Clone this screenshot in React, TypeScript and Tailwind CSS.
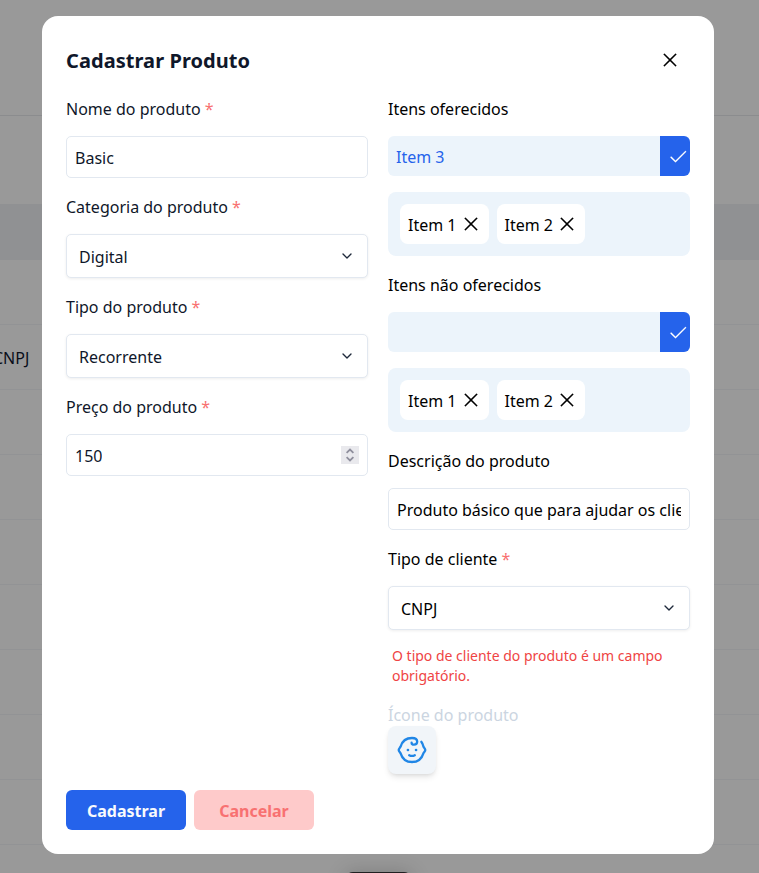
import type { ReactNode } from "react";
import { ChevronDown } from "lucide-react";
import { PiCheck, PiX } from "react-icons/pi";

function Label({ children, required }: { children: ReactNode; required?: boolean }) {
  return (
    <span className="block h-6 pt-px leading-6">
      {children}
      {required && <span className="text-[#f87171]"> *</span>}
    </span>
  );
}

function Select({ value }: { value: string }) {
  return (
    <button className="flex h-11 w-full items-center justify-between rounded-[5px] border border-[#e2e8f0] bg-white px-3 text-left shadow-[0_1px_3px_0_rgba(0,0,0,0.07)]">
      <span className="pt-0.5 leading-6">{value}</span>
      <ChevronDown className="size-4 text-[#1e293b]" />
    </button>
  );
}

function TextField({ value, children }: { value: string; children?: ReactNode }) {
  return (
    <div className="flex h-[42px] w-full items-center justify-between rounded-[5px] border border-[#e2e8f0] bg-white px-2">
      <span className="overflow-hidden pt-0.5 leading-6 whitespace-nowrap">{value}</span>
      {children}
    </div>
  );
}

function Stepper() {
  return (
    <span className="flex size-[18px] shrink-0 items-center justify-center bg-[#e9e9ed]">
      <svg className="size-[18px]" viewBox="0 0 18 18" fill="none" stroke="#8f8f9d" strokeWidth="1.8">
        <path d="M5.6 6.8 9 3.6l3.4 3.2M5.6 11.2 9 14.4l3.4-3.2" />
      </svg>
    </span>
  );
}

function ItemEditor({ value }: { value: string }) {
  return (
    <>
      <div className="flex h-10 overflow-hidden rounded-md bg-[#ecf4fb]">
        <span className="flex-1 px-2 pt-[9px] leading-6 text-[#2563eb]">{value}</span>
        <button className="flex w-[30px] items-center bg-[#2563eb] pb-px pl-2 text-white">
          <PiCheck className="size-5 shrink-0 stroke-[3]" />
        </button>
      </div>
      <div className="flex h-16 gap-2 rounded-lg bg-[#ecf4fb] p-3">
        {["Item 1", "Item 2"].map((item) => (
          <span key={item} className="flex h-10 items-center gap-1 rounded-lg bg-white px-2">
            <span className="pt-0.5 leading-6">{item}</span>
            <PiX className="size-5 stroke-[5]" />
          </span>
        ))}
      </div>
    </>
  );
}

function BabyIcon() {
  return (
    <svg className="size-8" viewBox="0 0 32 32" fill="none" stroke="#2086e6" strokeWidth="2.3" strokeLinecap="round" strokeLinejoin="round">
      <path d="M25.3 7.8c1.2 1.5 1.8 3.1 2.2 4.9.5 1.1 1.8 2.2 1.8 3.4s-1.4 2-1.9 3.2C25.7 24.8 21.7 28 16 28S6.3 24.8 4.6 19.3C4.1 18.1 2.7 17.2 2.7 16s1.3-2.2 1.9-3.4C6.2 7.2 10.2 4 16 4c3.3 0 5.2 1.3 5.2 3.6 0 2-1.3 3.1-3.2 3.1-1.5 0-2.4-.8-2.4-2" />
      <path d="M13.2 21.2c1.7.9 3.9.9 5.6 0" />
      <path d="M11.9 16h.1M20 16h.1" strokeWidth="2.6" />
    </svg>
  );
}

function Backdrop() {
  return (
    <div className="h-full bg-[#999999] text-[#090e19]">
      <div className="h-[116px] border-b border-[#8b8c8e]" />
      <div className="h-[88px]" />
      <div className="h-14 bg-[#909193]" />
      {["", "CNPJ", "", "", "", "", "", "", ""].map((text, i) => (
        <div key={i} className="flex h-[65px] items-center border-b border-[#929395]">
          <span className="-ml-[7px] pt-0.5">{text}</span>
        </div>
      ))}
    </div>
  );
}

export default function App() {
  return (
    <div className="relative h-[873px] w-[759px] overflow-hidden font-['Noto_Sans',sans-serif] text-base text-[#0f172a]">
      <Backdrop />
      <div className="absolute top-[872px] left-[345px] h-8 w-[67px] rounded-lg bg-[#211f21] shadow-[0_0_20px_rgba(0,0,0,0.18)]" />
      <section className="absolute top-4 left-[42px] flex w-[672px] flex-col rounded-2xl bg-white p-6">
        <header className="mb-4 flex h-10 items-center justify-between pr-2.5">
          <h1 className="pt-0.5 text-xl font-bold tracking-[0.06px]">Cadastrar Produto</h1>
          <button aria-label="Fechar" className="text-black">
            <PiX className="size-5 stroke-[5]" />
          </button>
        </header>
        <div className="grid grid-cols-2 items-start gap-5">
          <div className="flex flex-col gap-4">
            <Label required>Nome do produto</Label>
            <TextField value="Basic" />
            <Label required>Categoria do produto</Label>
            <Select value="Digital" />
            <Label required>Tipo do produto</Label>
            <Select value="Recorrente" />
            <Label required>Preço do produto</Label>
            <TextField value="150">
              <Stepper />
            </TextField>
          </div>
          <div className="flex min-w-0 flex-col gap-4 text-black">
            <Label>Itens oferecidos</Label>
            <ItemEditor value="Item 3" />
            <Label>Itens não oferecidos</Label>
            <ItemEditor value="" />
            <Label>Descrição do produto</Label>
            <TextField value="Produto básico que para ajudar os clientes" />
            <Label required>Tipo de cliente</Label>
            <Select value="CNPJ" />
            <p className="px-1 text-sm leading-5 text-[#ef4444]">O tipo de cliente do produto é um campo obrigatório.</p>
            <div>
              <span className="block h-6 pt-px leading-6 text-[#cbd5e1]">Ícone do produto</span>
              <div className="flex size-12 items-center justify-center rounded-lg bg-[#f1f5f9] shadow-md">
                <BabyIcon />
              </div>
            </div>
          </div>
        </div>
        <footer className="mt-4 flex gap-2 font-bold">
          <button className="h-10 w-[120px] rounded-md bg-[#2563eb] pt-0.5 text-[#f8fafc]">Cadastrar</button>
          <button className="h-10 w-[120px] rounded-md bg-[#fecaca] pt-0.5 text-[#f87171]">Cancelar</button>
        </footer>
      </section>
    </div>
  );
}
